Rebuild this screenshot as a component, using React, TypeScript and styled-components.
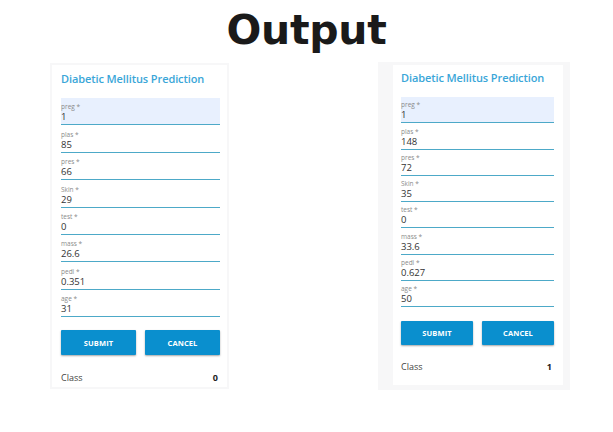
import * as React from 'react';
import styled, {createGlobalStyle} from 'styled-components';

const GlobalStyle = createGlobalStyle`
  html, body {
    margin: 0;
    padding: 0;
    background: #ffffff;
  }
  body {
    font-family: "Open Sans", "Noto Sans", sans-serif;
  }
`;

const Page = styled.div`
  width: 613px;
  height: 432px;
  overflow: hidden;
`;

const Heading = styled.h1`
  margin: 0;
  height: 58px;
  font-family: "DejaVu Sans", sans-serif;
  font-weight: bold;
  font-size: 41px;
  line-height: 60px;
  letter-spacing: -0.3px;
  text-align: center;
  color: #1a1a1a;
`;

const Row = styled.div`
  display: flex;
  align-items: flex-start;
`;

interface ShellProps {
    $left: number;
    $top: number;
    $width: number;
    $height: number;
    $pad: string;
}

const Shell = styled.div<ShellProps>`
  margin-left: ${p => p.$left}px;
  margin-top: ${p => p.$top}px;
  width: ${p => p.$width}px;
  height: ${p => p.$height}px;
  padding: ${p => p.$pad};
  box-sizing: border-box;
  background: #f7f7f8;
  display: flex;
`;

const Card = styled.div<{ $pad: string }>`
  flex: 1;
  background: #ffffff;
  padding: ${p => p.$pad};
  display: flex;
  flex-direction: column;
`;

const Title = styled.div<{ $gap: number }>`
  font-family: "Open Sans", sans-serif;
  font-weight: 600;
  font-size: 11px;
  letter-spacing: -0.1px;
  color: #3aa6d8;
  margin-bottom: ${p => p.$gap}px;
`;

const Field = styled.div<{ $h: number; $filled?: boolean }>`
  height: ${p => p.$h}px;
  box-sizing: border-box;
  display: flex;
  flex-direction: column;
  justify-content: flex-end;
  padding-bottom: 1px;
  border-bottom: 1px solid #4da9c8;
  background: ${p => (p.$filled ? '#e8f0fe' : 'transparent')};
`;

const Label = styled.div`
  font-size: 6.5px;
  line-height: 8px;
  color: #8a8a8a;
`;

const Value = styled.div`
  font-size: 9.5px;
  line-height: 12px;
  color: #333333;
`;

const Buttons = styled.div<{ $top: number }>`
  display: flex;
  gap: 9px;
  margin-top: ${p => p.$top}px;
`;

const Button = styled.button<{ $h: number }>`
  flex: 1;
  height: ${p => p.$h}px;
  border: none;
  border-radius: 1px;
  background: #0a8fce;
  color: #ffffff;
  font-family: "Open Sans", sans-serif;
  font-weight: 700;
  font-size: 7.5px;
  letter-spacing: 0.1px;
  box-shadow: 0 1px 2px rgba(0, 0, 0, 0.35);
  padding: 0;
`;

const ClassRow = styled.div<{ $top: number }>`
  display: flex;
  justify-content: space-between;
  align-items: center;
  margin-top: ${p => p.$top}px;
  padding-right: 2px;
  font-size: 9px;
  color: #444444;
`;

const Result = styled.span`
  font-weight: 700;
  color: #222222;
`;

interface Layout {
    left: number;
    top: number;
    width: number;
    height: number;
    shellPad: string;
    cardPad: string;
    titleGap: number;
    fieldH: number;
    buttonTop: number;
    buttonH: number;
    classTop: number;
}

interface PredictionProps {
    values: string[];
    result: string;
    layout: Layout;
}

const names = ['preg', 'plas', 'pres', 'Skin', 'test', 'mass', 'pedi', 'age'];

const Prediction = ({values, result, layout}: PredictionProps) => (
    <Shell $left={layout.left} $top={layout.top} $width={layout.width} $height={layout.height} $pad={layout.shellPad}>
        <Card $pad={layout.cardPad}>
            <Title $gap={layout.titleGap}>Diabetic Mellitus Prediction</Title>
            {names.map((name, index) =>
                <Field key={name} $h={layout.fieldH} $filled={index === 0}>
                    <Label>{name} *</Label>
                    <Value>{values[index]}</Value>
                </Field>
            )}
            <Buttons $top={layout.buttonTop}>
                <Button $h={layout.buttonH}>SUBMIT</Button>
                <Button $h={layout.buttonH}>CANCEL</Button>
            </Buttons>
            <ClassRow $top={layout.classTop}>
                <span>Class</span>
                <Result>{result}</Result>
            </ClassRow>
        </Card>
    </Shell>
);

const leftLayout: Layout = {
    left: 50, top: 5, width: 179, height: 326,
    shellPad: '2px 2px 2px 2px', cardPad: '6px 7px 0 9px',
    titleGap: 12, fieldH: 27.4, buttonTop: 13, buttonH: 25, classTop: 16,
};

const rightLayout: Layout = {
    left: 149, top: 4, width: 192, height: 328,
    shellPad: '3px 7px 5px 15px', cardPad: '5px 9px 0 8px',
    titleGap: 12, fieldH: 26.3, buttonTop: 14, buttonH: 24, classTop: 15,
};

export default function App() {
    return (
        <Page>
            <GlobalStyle/>
            <Heading>Output</Heading>
            <Row>
                <Prediction values={['1', '85', '66', '29', '0', '26.6', '0.351', '31']} result="0" layout={leftLayout}/>
                <Prediction values={['1', '148', '72', '35', '0', '33.6', '0.627', '50']} result="1" layout={rightLayout}/>
            </Row>
        </Page>
    );
}
